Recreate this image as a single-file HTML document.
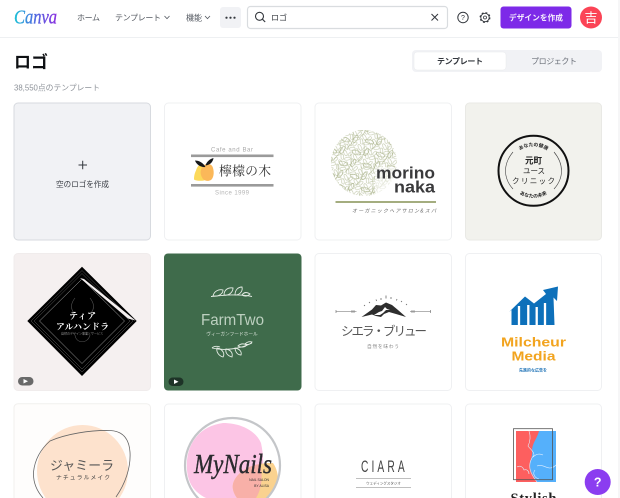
<!DOCTYPE html>
<html lang="ja"><head><meta charset="utf-8"><title>ロゴ</title>
<style>
html,body{margin:0;padding:0;width:620px;height:498px;overflow:hidden;background:#fff}
svg{display:block;position:absolute;left:0;top:0;filter:blur(.3px)}
text{font-family:"Liberation Sans","Noto Sans CJK JP",sans-serif}
.nav{font-size:8px;fill:#555a62}
.serif{font-family:"Liberation Serif","Noto Serif CJK SC",serif}
.card{fill:#fff;stroke:#eff0f2;stroke-width:1}
</style></head><body>
<svg width="620" height="498" viewBox="0 0 620 498" xmlns="http://www.w3.org/2000/svg">
<defs>
<linearGradient id="cv" x1="0" x2="1" y1="0" y2="0"><stop offset="0" stop-color="#19c3d6"/><stop offset=".45" stop-color="#4b6fe0"/><stop offset="1" stop-color="#8b2fe0"/></linearGradient>
<pattern id="lf" width="11" height="11" patternUnits="userSpaceOnUse" patternTransform="rotate(25)">
<g fill="none" stroke="#b4bc98" stroke-width=".5"><ellipse cx="3.500" cy="3.500" rx="3.200" ry="1.400" transform="rotate(40 3.500 3.500)"/><ellipse cx="8.500" cy="2.500" rx="1.300" ry="2.600" transform="rotate(20 8.500 2.500)"/><ellipse cx="2.500" cy="8.500" rx="1.300" ry="2.800" transform="rotate(-30 2.500 8.500)"/><ellipse cx="8" cy="8" rx="3" ry="1.400" transform="rotate(-35 8 8)"/></g></pattern>
<pattern id="lf2" width="17" height="17" patternUnits="userSpaceOnUse" patternTransform="rotate(-40)">
<g fill="none" stroke="#a2ac80" stroke-width=".5"><ellipse cx="5" cy="6" rx="4.500" ry="2" transform="rotate(60 5 6)"/><ellipse cx="13" cy="12" rx="4" ry="1.800" transform="rotate(-20 13 12)"/><path d="M0 14C5 12 9 16 17 3"/></g></pattern>
<clipPath id="nailclip"><circle cx="232.500" cy="465.500" r="47"/></clipPath>
<path id="arcTop" d="M509 170.700A24.500 24.500 0 0 1 558 170.700"/>
<path id="arcBot" d="M506.300 170.700A27 27 0 0 0 560.300 170.700"/>
</defs>

<!-- header -->
<rect x="0" y="37" width="620" height="1" fill="#eef0f2"/>
<rect x="618" y="0" width="2" height="498" fill="#f6f6f7"/>
<text x="14" y="23.500" class="serif" font-size="20" font-style="italic" fill="url(#cv)" stroke="url(#cv)" stroke-width=".35" textLength="43" lengthAdjust="spacingAndGlyphs">Canva</text>
<text x="77" y="20.500" class="nav" textLength="23">ホーム</text>
<text x="115" y="20.500" class="nav" textLength="46">テンプレート</text>
<path d="M164.500 16l2.500 2.700 2.500-2.700" fill="none" stroke="#555a62" stroke-width=".8"/>
<text x="186" y="20.500" class="nav" textLength="16">機能</text>
<path d="M205 16l2.500 2.700 2.500-2.700" fill="none" stroke="#555a62" stroke-width=".8"/>
<rect x="220" y="7" width="21" height="21" rx="3" fill="#f1f2f5"/>
<g fill="#33373d"><circle cx="226.500" cy="17.700" r="1.100"/><circle cx="230.500" cy="17.700" r="1.100"/><circle cx="234.500" cy="17.700" r="1.100"/></g>

<rect x="247.500" y="6.500" width="200" height="22" rx="3" fill="#fff" stroke="#d9dcdf" stroke-width="1.200"/>
<circle cx="259.500" cy="16.300" r="4" fill="none" stroke="#33373d" stroke-width="1.100"/>
<path d="M262.400 19.200l2.800 2.800" stroke="#33373d" stroke-width="1.100"/>
<text x="271" y="20.500" font-size="8" fill="#33373d">ロゴ</text>
<path d="M431.500 14l6.500 6.500M438 14l-6.500 6.500" stroke="#33373d" stroke-width="1"/>
<circle cx="463" cy="17.500" r="5.200" fill="none" stroke="#33373d" stroke-width="1"/>
<text x="463" y="20" font-size="7" text-anchor="middle" fill="#33373d">?</text>
<circle cx="485" cy="17.500" r="4.200" fill="none" stroke="#33373d" stroke-width=".9"/>
<circle cx="485" cy="17.500" r="4.900" fill="none" stroke="#33373d" stroke-width="1.100" stroke-dasharray="1.900 2"/>
<circle cx="485" cy="17.500" r="1.500" fill="none" stroke="#33373d" stroke-width=".8"/>
<rect x="500.500" y="6.500" width="71" height="22" rx="3" fill="#7d2ae8"/>
<text x="509" y="20.500" font-size="7.700" font-weight="700" fill="#f4ecfd" textLength="54">デザインを作成</text>
<circle cx="591" cy="17.500" r="11" fill="#fb4456"/>
<text x="591" y="22.300" font-size="13" text-anchor="middle" fill="#fff">吉</text>

<!-- title -->
<text x="14" y="68" font-size="17" font-weight="700" fill="#0e1013">ロゴ</text>
<text x="14" y="90.500" font-size="7.800" fill="#8d9299" textLength="86">38,550点のテンプレート</text>
<rect x="412" y="50" width="190" height="22" rx="4" fill="#f1f2f5"/>
<rect x="414" y="52" width="92" height="18" rx="3" fill="#fff" stroke="#e8e9ec" stroke-width=".5"/>
<text x="437" y="64" font-size="8" fill="#33373d" font-weight="700" textLength="46">テンプレート</text>
<text x="531" y="64" font-size="8" fill="#6b7079" textLength="46">プロジェクト</text>

<!-- row 1 -->
<rect x="14" y="103" width="136.500" height="137" rx="4" fill="#f1f2f5" stroke="#d7dadf"/>
<path d="M78.500 165h8.500M82.700 160.700v8.500" stroke="#33373d" stroke-width="1"/>
<text x="56" y="187" font-size="7.700" fill="#3b3f46" textLength="53">空のロゴを作成</text>

<rect class="card" x="164.500" y="103" width="136.500" height="137" rx="4"/>
<text x="211" y="151.500" font-size="6" fill="#a9a9a9" textLength="42">Cafe and Bar</text>
<rect x="191" y="154.500" width="82.500" height="2.600" fill="#9a9a9a"/>
<rect x="191" y="184" width="82.500" height="2.600" fill="#9a9a9a"/>
<text x="215" y="194.500" font-size="6" fill="#b4b4b4" textLength="34">Since 1999</text>
<path d="M200 165c4-1 7 1 8 5 1 5 0 9-4 10.500-3 .5-8 .5-10-1 0-4 1-7 2-9 1-3 2-5 4-5.500z" fill="#fcd95a"/>
<path d="M204 165c4-2 8-1 9 3 1.500 5 .5 10-2 12-3 1.500-6 1-8-1-2-3-3-6-2-9 .5-2 1.500-4 3-5z" fill="#fbb859"/>
<path d="M195 160.500c4 0 8 2 10.500 6.500-4 .5-9-2-10.500-6.500zM205.500 165.500c1-3.500 4-6.500 8-7.500-.5 4-3.500 7-8 7.500z" fill="#15171a"/>
<text x="219" y="175.500" font-size="12.800" fill="#333" class="serif" textLength="52">檸檬の木</text>

<rect class="card" x="315" y="103" width="136.500" height="137" rx="4"/>
<circle cx="364" cy="163" r="33" fill="url(#lf)"/>
<circle cx="364" cy="163" r="33" fill="url(#lf2)"/>
<rect x="375" y="167" width="61" height="27" fill="#fff" opacity=".6"/>
<text x="376" y="178.500" font-size="17" font-weight="700" fill="#3a3a3c" textLength="59" lengthAdjust="spacingAndGlyphs">morino</text>
<text x="394" y="192.700" font-size="17" font-weight="700" fill="#3a3a3c" textLength="41" lengthAdjust="spacingAndGlyphs">naka</text>
<rect x="335.500" y="201" width="100.500" height="2" fill="#a4ad7f"/>
<text x="352" y="212.500" font-size="5" fill="#666" font-style="italic" textLength="84">オーガニックヘアサロン&amp;スパ</text>

<rect x="465.500" y="103" width="136" height="137" rx="4" fill="#f2f2ed" stroke="#e9e9e5"/>
<circle cx="533.500" cy="170.800" r="35" fill="none" stroke="#111" stroke-width="2"/>
<path d="M513 152c-10 12-10 26 0 37M554 152c10 12 10 26 0 37" fill="none" stroke="#444" stroke-width=".6"/>
<text font-size="4.800" font-weight="700" fill="#222"><textPath href="#arcTop" startOffset="50%" text-anchor="middle">あなたの健康</textPath></text>
<text font-size="4.800" font-weight="700" fill="#222"><textPath href="#arcBot" startOffset="50%" text-anchor="middle">あなたの未来</textPath></text>
<text x="525" y="163.500" font-size="8.500" font-weight="700" fill="#222" textLength="17">元町</text>
<text x="523" y="173.500" font-size="7.500" fill="#222" textLength="22">ユース</text>
<text x="512" y="183.500" font-size="7.500" fill="#222" textLength="43">クリニック</text>

<!-- row 2 -->
<rect x="14" y="253.500" width="136.500" height="137" rx="4" fill="#f5f0f0" stroke="#f0ecec"/>
<path d="M82 266.700L136.700 321 82 376 27.300 321z" fill="#000"/>
<path d="M82 270.500L133 321 82 372 31 321zM82 273.500L130 321 82 369 34 321z" fill="none" stroke="#777" stroke-width=".4"/>
<path d="M82 279L124.500 321 82 363.500 39.500 321z" fill="none" stroke="#bbb" stroke-width=".5"/>
<path d="M80 278L84 279 135.500 320.500 128 318.500z" fill="#f5f0f0"/>
<path d="M75 298c-4 5-5 10-1 15M90 298c4 5 5 10 1 15M75 335c1 9 13 9 15 0" fill="none" stroke="#555" stroke-width=".6"/>
<text x="69" y="319" class="serif" font-size="9" font-weight="700" fill="#fff" textLength="27">ティア</text>
<text x="56" y="329.500" class="serif" font-size="8.800" font-weight="700" fill="#fff" textLength="53">アルハンドラ</text>
<text x="82" y="334.500" font-size="3" fill="#999" text-anchor="middle">自然のデザイン事業とサービス</text>
<rect x="18" y="377" width="15.500" height="8.500" rx="4.200" fill="#6a6a6a"/>
<path d="M23.500 379l4.500 2.300-4.500 2.200z" fill="#fff"/>

<rect x="164" y="253.500" width="137.500" height="137" rx="4" fill="#3f6b4b"/>
<g fill="none" stroke="#e5ece5" stroke-width=".9">
<path d="M211 296.500c10-1 28-3 41 0"/>
<path d="M213 296c1-5 6-7 10-6 0 4-5 7-10 6zM224 295c0-5 4-8 9-7 0 4-4 8-9 7zM235 295c0-5 3-8 7-8 1 4-2 8-7 8zM242 295c2-3 5-3 8-1-2 2-5 3-8 1z"/>
<path d="M212 348c12 3 28 1 40-5"/>
<path d="M217 348c-1 4 2 8 6 9 2-3 0-8-6-9zM226 349c-1 4 2 7 6 8 1-4-1-7-6-8zM235 348c0 3 2 7 6 7 1-3-1-6-6-7zM238 346c2-2 5-3 9-1-2 2-6 3-9 1zM245 344c2-2 4-3 7-2-1 2-4 3-7 2zM212 348c2-2 5-2 8-1"/>
</g>
<text x="201" y="325" font-size="16" fill="#bdd0c0" textLength="63" lengthAdjust="spacingAndGlyphs">FarmTwo</text>
<text x="232" y="335.500" font-size="4.700" fill="#d5e0d5" text-anchor="middle">ヴィーガンフードホール</text>
<rect x="168.500" y="377.500" width="15" height="8.500" rx="4.200" fill="#1e3327"/>
<path d="M174 379.500l4.500 2.300-4.500 2.200z" fill="#fff"/>

<rect class="card" x="315" y="253.500" width="136.500" height="137" rx="4"/>
<path d="M336 311.500h20.500M410 311.500h20.500M336 310v3M430.500 310v3M352 310v3M354 310v3M412 310v3M414 310v3" stroke="#666" stroke-width=".6" fill="none"/>
<path d="M361.500 317L372 309.500 376 305 381 305.500 386 302.500 392 305 398 310 406 317 396 314 389 312 384 314 381 317 376 316 372 314.500z" fill="#2e2e2e"/>
<path d="M374 315l5-3 3-1 3-4 2 2 3 1-4 0-3 3-3 2z" fill="#fff"/>
<path d="M364 305l1 1M369 302l1 1M376 299.500l.5 1.500M381 298v2M386 295.500v3M391 297v2M397 299l-.500 1.500M402 301l-1 1M407 304l-1 1" stroke="#555" stroke-width=".7"/>
<text x="341" y="335.500" font-size="12.500" fill="#555" textLength="86">シエラ・ブリュー</text>
<text x="367" y="348" font-size="4.800" fill="#888" textLength="32">自然を味わう</text>

<rect class="card" x="465.500" y="253.500" width="136" height="137" rx="4"/>
<path d="M509 312L525 296.500 534 303.500 546 294 543 290 558 286.500 557 301 553.500 297.500 554.500 325H511.500V310z" fill="#0d70ba"/>
<path d="M519 306v19M528.300 305v20M536.700 307v18M545 303v22" stroke="#fff" stroke-width="2.300"/>
<text x="501" y="346.700" font-size="12.500" font-weight="700" fill="#f2a41f" textLength="65" lengthAdjust="spacingAndGlyphs">Milcheur</text>
<text x="511.500" y="360.700" font-size="12.500" font-weight="700" fill="#f2a41f" textLength="44" lengthAdjust="spacingAndGlyphs">Media</text>
<text x="519" y="371.500" font-size="4" font-weight="700" fill="#1b70b5" textLength="28">先進的な広告を</text>

<!-- row 3 -->
<rect x="14" y="403.700" width="136.500" height="110" rx="4" fill="#fefdfc" stroke="#f1f0ee"/>
<ellipse cx="82.500" cy="471" rx="45.500" ry="46" fill="#fde2cd"/>
<path d="M43 498C36 490 33 482 33.500 472 35 458 42 448 50 441 66 434 90 430 110 430.500 122 431 129 438 130 452 131 468 125 484 116 497" fill="none" stroke="#666" stroke-width=".8"/>
<text x="50" y="470" font-size="12.800" fill="#555" textLength="64">ジャミーラ</text>
<text x="56" y="479.500" font-size="5.800" fill="#444" textLength="54">ナチュラルメイク</text>

<rect class="card" x="164.500" y="404" width="136.500" height="110" rx="4"/>
<g clip-path="url(#nailclip)">
<path d="M187 470c-2-25 12-44 36-47 18 0 33 8 38 20 4 18 3 40-5 55h-50c-12-6-18-15-19-28z" fill="#fcc5e5"/>
<path d="M233 484c2-10 18-22 40-21 7 10 6 24 2 35h-38c-3-4-5-9-4-14z" fill="#fad28f"/>
<path d="M233 484c2-9 13-18 27-20 3 12 2 24-4 34h-19c-3-4-5-9-4-14z" fill="#f8b0a8"/>
</g>
<circle cx="232.500" cy="465.500" r="47.500" fill="none" stroke="#c4c6c9" stroke-width="2.200"/>
<text x="194" y="473" class="serif" font-size="27" font-style="italic" fill="#2b2b2f" stroke="#2b2b2f" stroke-width=".4" textLength="78" lengthAdjust="spacingAndGlyphs">MyNails</text>
<text x="269" y="481" font-size="3.400" fill="#333" text-anchor="end">NAIL SALON</text>
<text x="269" y="487" font-size="3.400" fill="#333" text-anchor="end">BY ALISA</text>

<rect class="card" x="315" y="404" width="136.500" height="110" rx="4"/>
<text transform="translate(361 472) scale(.62 1)" font-size="16.500" letter-spacing="5" fill="#444">CIARA</text>
<path d="M356 478.500h55M356 487.500h55" stroke="#aaa" stroke-width=".8"/>
<text x="383.500" y="484.500" font-size="3.500" fill="#555" text-anchor="middle">ウェディングスタジオ</text>

<rect class="card" x="465.500" y="404" width="136" height="110" rx="4"/>
<rect x="516" y="431" width="24" height="51" fill="#fd5f5f"/>
<path d="M539 431h17v51h-19c-3-6-7-10-7-16 0-7 3-10 2-15 0-8 5-12 7-20z" fill="#55b0fb"/>
<path d="M529 431c2 6 1 11-1 15 2 3 6 5 6 9-3 4-5 8-4 14 1 5 4 9 7 13M533 457c4-4 8-3 10-2M537 466c5-2 9 2 13 2 2 0 4-1 6-3M517 467c3-2 6 0 7 3 3-1 5 1 5 4M535 470c-3 4 0 8 4 9" fill="none" stroke="#dfeeff" stroke-width=".6"/>
<rect x="513.500" y="428.700" width="39" height="51" fill="none" stroke="#555" stroke-width=".8"/>
<text x="510.500" y="503" class="serif" font-size="14.500" font-weight="700" fill="#222" textLength="46">Stylish</text>

<circle cx="597.700" cy="482" r="13" fill="#8b3df0"/>
<text x="597.700" y="486.700" font-size="12.500" font-weight="700" fill="#fff" text-anchor="middle">?</text>
</svg>
</body></html>
